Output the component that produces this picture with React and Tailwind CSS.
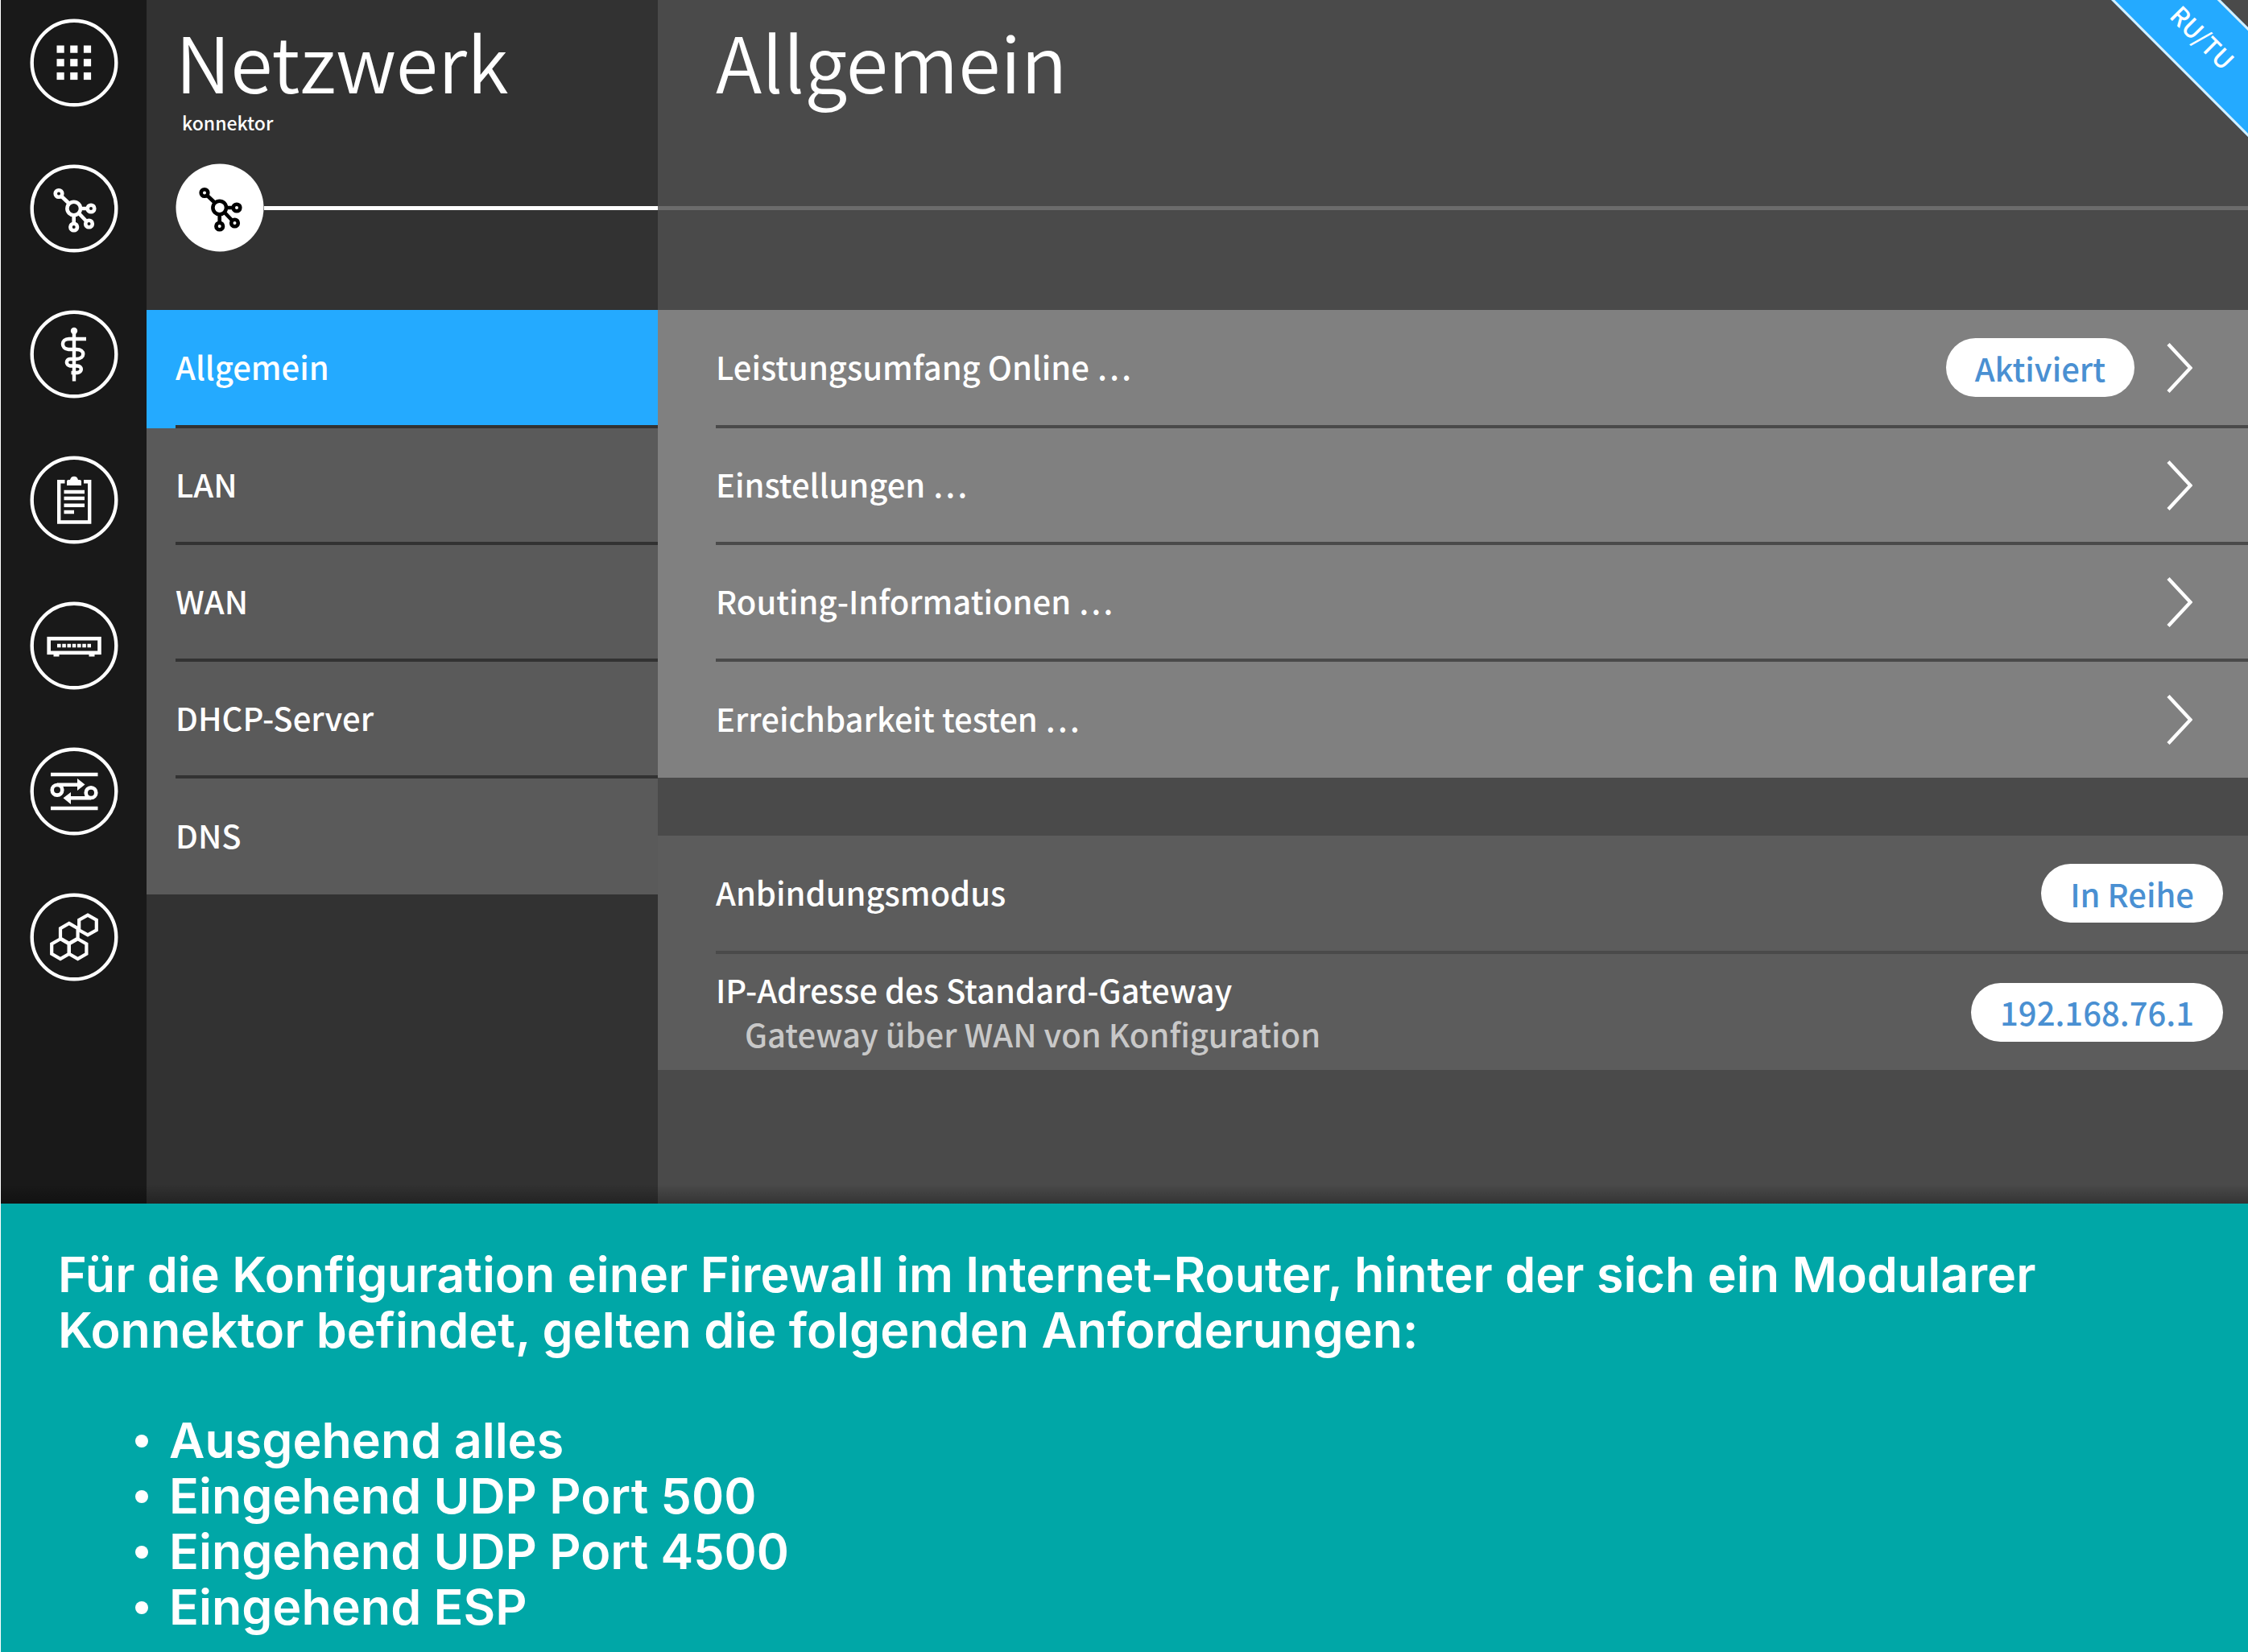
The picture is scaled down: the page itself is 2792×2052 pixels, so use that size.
import React from "react";

const SANS = "font-['Noto_Sans_CJK_SC','Noto_Sans',sans-serif]";

function hexPoints(cx, cy) {
  return [
    [0, -12.4],
    [10.8, -6.2],
    [10.8, 6.2],
    [0, 12.4],
    [-10.8, 6.2],
    [-10.8, -6.2],
  ]
    .map(([x, y]) => `${cx + x},${cy + y}`)
    .join(" ");
}

function GridIcon() {
  return (
    <g fill="currentColor" stroke="none">
      {[33.5, 50.2, 66.9].map((y) =>
        [33.5, 50.2, 66.9].map((x) => <rect key={`${x}-${y}`} x={x} y={y} width="9.2" height="9.2" />)
      )}
    </g>
  );
}

function NetworkIcon() {
  return (
    <g strokeWidth="4.6">
      <circle cx="54.7" cy="55" r="8.3" />
      <circle cx="36" cy="36.5" r="4.3" />
      <circle cx="76" cy="55" r="4.3" />
      <circle cx="73.5" cy="74" r="4.3" />
      <circle cx="54.7" cy="78" r="4.3" />
      <path d="M39 39.5L49 49M63.5 55H72M61 61L70.5 71M54.7 63.5V74" />
    </g>
  );
}

function MedicalIcon() {
  return (
    <g strokeWidth="4.4">
      <path d="M55 25V88.5" />
      <circle cx="55" cy="26" r="4.2" fill="currentColor" stroke="none" />
      <path d="M70 36H48.5C38.5 36 38.5 48.5 48 49H58C69 49 69 60.5 58 61H50C44.5 61 44.5 69 50 69.5H59C65.5 69.5 65.5 77.500 59 78H51.5" />
    </g>
  );
}

function ClipboardIcon() {
  return (
    <g strokeWidth="4.4">
      <path d="M43.5 32.3H36.2V82.5H74.2V32.3H67" />
      <path d="M46 37V31.5Q46 30 48 30H50Q51 25.7 55 25.7Q59 25.7 60 30H62Q64 30 64 31.5V37Z" fill="currentColor" stroke="none" />
      <path d="M42.5 45H68M42.5 53H68M42.5 61.7H68M42.5 70H55" />
    </g>
  );
}

function RouterIcon() {
  return (
    <g strokeWidth="4.6">
      <rect x="23.7" y="46.2" width="62.8" height="17.6" />
      <path d="M34 55H76" strokeDasharray="4.6 1.65" />
      <path d="M29.5 67H36.5M73.5 67H80.5" strokeWidth="3" />
    </g>
  );
}

function TransferIcon() {
  return (
    <g strokeWidth="4.6">
      <path d="M26 34H84.5M26 76H84.5" />
      <circle cx="34" cy="53.3" r="6.3" />
      <circle cx="76" cy="56.7" r="6.3" />
      <path d="M34 46.8H62M76 63.3H48" />
      <path d="M59 39L68.5 46.5L59 54ZM51 56L41.5 63.3L51 71Z" fill="currentColor" stroke="none" />
    </g>
  );
}

function HexIcon() {
  return (
    <g strokeWidth="4.2">
      <polygon points={hexPoints(72, 40)} />
      <polygon points={hexPoints(48.8, 50.3)} />
      <polygon points={hexPoints(38, 69.7)} />
      <polygon points={hexPoints(59.6, 69.7)} />
    </g>
  );
}

function RoundIcon({ children, filled }) {
  return (
    <svg
      viewBox="0 0 110 110"
      className={filled ? "size-[110px] shrink-0 text-black" : "size-[110px] shrink-0 text-white"}
      fill="none"
      stroke="currentColor"
      aria-hidden="true"
    >
      {filled ? (
        <circle cx="55" cy="55" r="54.5" fill="#fff" stroke="none" />
      ) : (
        <circle cx="55" cy="55" r="52.3" strokeWidth="4.4" />
      )}
      {children}
    </svg>
  );
}

const RAIL = [
  ["Übersicht", GridIcon],
  ["Netzwerk", NetworkIcon],
  ["Praxis", MedicalIcon],
  ["Protokoll", ClipboardIcon],
  ["Geräte", RouterIcon],
  ["System", TransferIcon],
  ["Module", HexIcon],
];

const MENU = ["Allgemein", "LAN", "WAN", "DHCP-Server", "DNS"];

const LINKS = [
  { label: "Leistungsumfang Online …", value: "Aktiviert" },
  { label: "Einstellungen …" },
  { label: "Routing-Informationen …" },
  { label: "Erreichbarkeit testen …" },
];

const RULES = [
  "Ausgehend alles",
  "Eingehend UDP Port 500",
  "Eingehend UDP Port 4500",
  "Eingehend ESP",
];

function Pill({ children }) {
  return (
    <span className="flex h-[73px] items-center rounded-full bg-white px-9 text-[#4a90d2]">
      {children}
    </span>
  );
}

function Chevron() {
  return (
    <svg viewBox="0 0 32 62" className="h-[62px] w-8" fill="none" stroke="#fff" strokeWidth="4.4" aria-hidden="true">
      <path d="M2 1.5L29.5 31L2 60.5" />
    </svg>
  );
}

export default function App() {
  return (
    <div className="flex min-h-screen flex-col border-l border-white">
      <div className={`relative flex flex-1 overflow-hidden bg-[#4a4a4a] text-[40px] leading-[56px] font-medium text-white ${SANS}`}>
        <nav aria-label="Hauptmenü" className="w-[181px] shrink-0 bg-[#191919] pt-[23px]">
          <div className="flex flex-col items-center gap-[71px]">
            {RAIL.map(([name, Icon]) => (
              <button key={name} type="button" aria-label={name} className="block">
                <RoundIcon>
                  <Icon />
                </RoundIcon>
              </button>
            ))}
          </div>
        </nav>

        <aside className="w-[635px] shrink-0 bg-[#323232]">
          <header className="h-[385px]">
            <div className="h-[203px] pt-4 pl-9">
              <h1 className="text-[95px] leading-[118px] font-[350]">Netzwerk</h1>
              <p className="pt-1 pl-2 text-[23px] leading-7">konnektor</p>
            </div>
            <div className="flex items-center pl-9">
              <RoundIcon filled>
                <NetworkIcon />
              </RoundIcon>
              <div className="h-[5px] flex-1 bg-white" />
            </div>
          </header>
          <nav aria-label="Netzwerk">
            {MENU.map((item, i) => (
              <a
                key={item}
                href="#"
                aria-current={i === 0 ? "page" : undefined}
                className="flex h-[145px] bg-[#5a5a5a] pl-9 first:h-[147px] first:bg-[#24aaff] last:h-36"
              >
                <span className={i < 4 ? "flex flex-1 items-center border-b-4 border-[#323232] pb-1" : "flex flex-1 items-center pb-1"}>
                  {item}
                </span>
              </a>
            ))}
          </nav>
        </aside>

        <main className="min-w-0 flex-1">
          <header className="h-[385px]">
            <h2 className="h-64 pt-4 pl-[72px] text-[95px] leading-[118px] font-[350]">Allgemein</h2>
            <div className="h-[5px] bg-[#6c6c6c]" />
          </header>
          <section className="bg-[#808080]">
            {LINKS.map(({ label, value }, i) => (
              <button
                key={label}
                type="button"
                className="flex h-[145px] w-full pl-[72px] text-left first:h-[147px] last:h-36"
              >
                <span className={i < 3 ? "flex h-full flex-1 items-center gap-10 border-b-4 border-[#4a4a4a] pr-[69px]" : "flex h-full flex-1 items-center gap-10 pr-[69px]"}>
                  <span className="flex-1 pb-1">{label}</span>
                  {value && <Pill>{value}</Pill>}
                  <Chevron />
                </span>
              </button>
            ))}
          </section>
          <section className="mt-[72px] bg-[#5c5c5c] pl-[72px]">
            <div className="flex h-[147px] items-center justify-between border-b-4 border-[#4a4a4a] pr-[31px]">
              <span className="pb-1">Anbindungsmodus</span>
              <Pill>In Reihe</Pill>
            </div>
            <div className="flex h-36 items-center justify-between pr-[31px]">
              <div className="leading-[55px]">
                <p>IP-Adresse des Standard-Gateway</p>
                <p className="pl-9 text-[#c8c8c8]">Gateway über WAN von Konfiguration</p>
              </div>
              <Pill>192.168.76.1</Pill>
            </div>
          </section>
        </main>

        <div className="absolute -top-[2px] -right-[194px] flex h-24 w-[500px] rotate-45 items-center justify-center border-y-[3px] border-[#d5f0ff] bg-[#24aaff] text-[31px]">
          RU/TU
        </div>
        <div className="pointer-events-none absolute inset-x-0 bottom-0 h-6 bg-linear-to-b from-transparent to-black/30" />
      </div>

      <footer className="bg-[#00a7a7] pt-[54px] pr-20 pb-[21px] pl-[71px] font-['Inter',sans-serif] text-[61px] leading-[69px] font-semibold text-white">
        <p>
          Für die Konfiguration einer Firewall im Internet-Router, hinter der sich ein Modularer{" "}
          <br />
          Konnektor befindet, gelten die folgenden Anforderungen:
        </p>
        <ul className="mt-[68px] pl-24">
          {RULES.map((rule) => (
            <li key={rule} className="flex items-center gap-[26px]">
              <span className="size-4 rounded-full bg-white" />
              {rule}
            </li>
          ))}
        </ul>
      </footer>
    </div>
  );
}
